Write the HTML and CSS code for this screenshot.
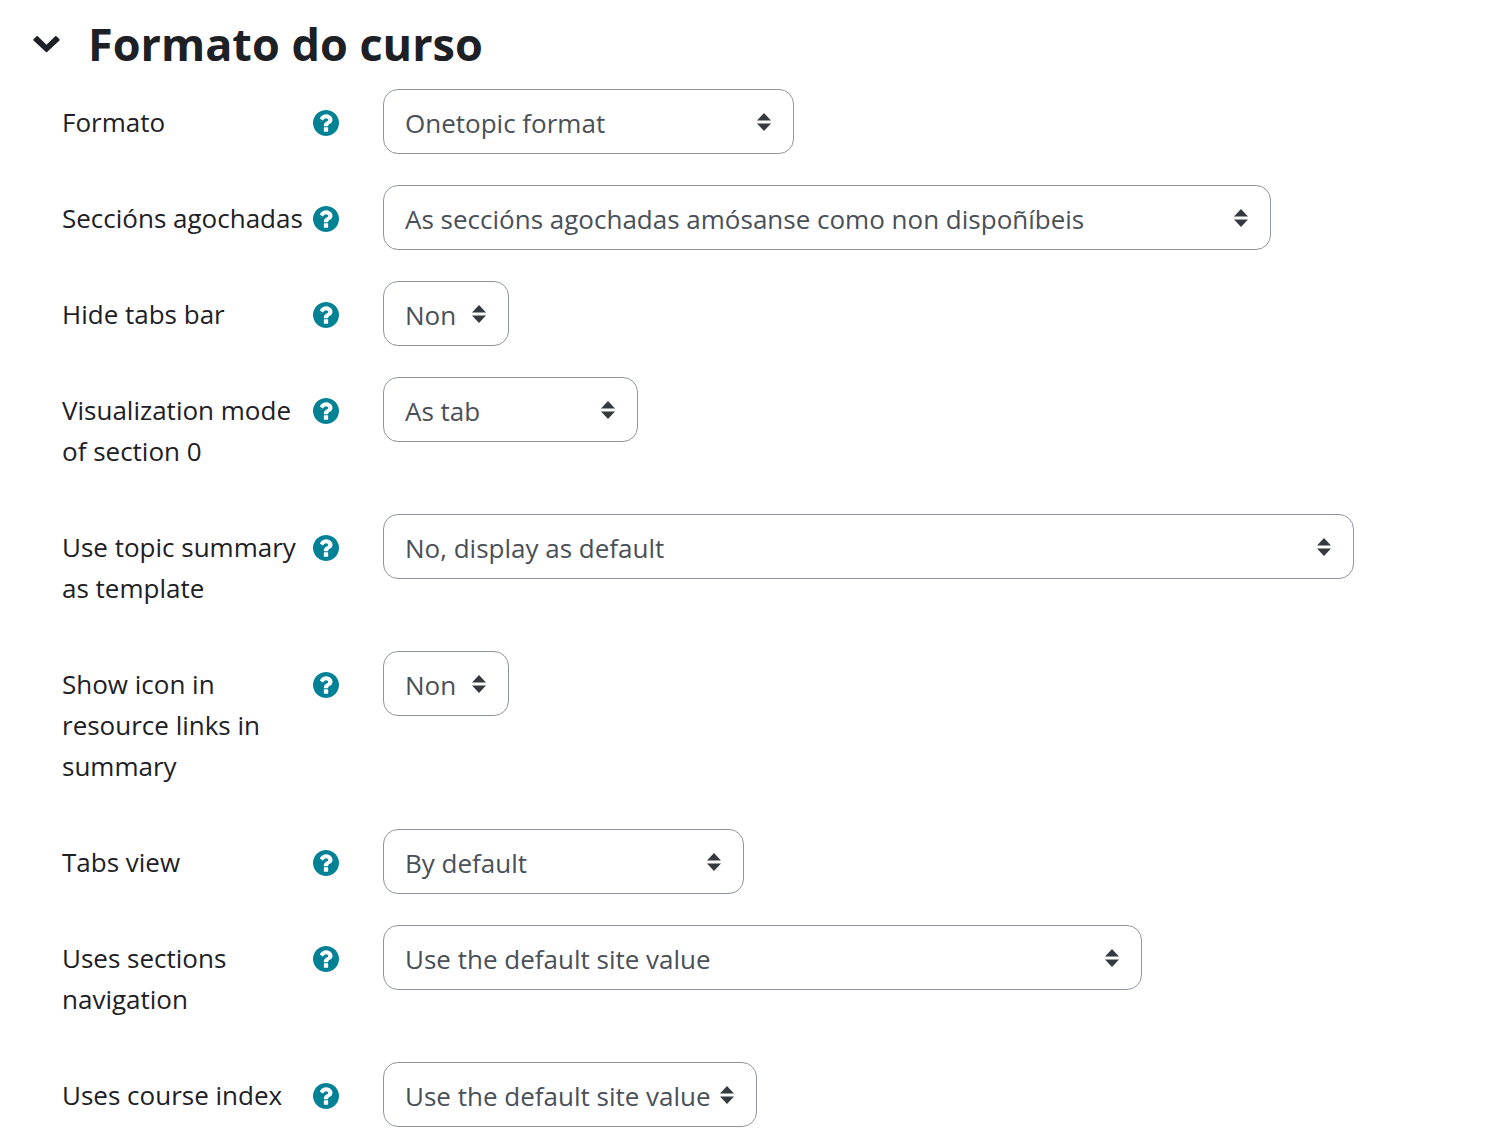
FILE: index.html
```
<!DOCTYPE html>
<html lang="gl">
  <head>
    <meta charset="UTF-8" />
    <meta name="viewport" content="width=device-width, initial-scale=1.0" />
    <title>Formato do curso</title>
    <link rel="stylesheet" href="styles.css">
  </head>
  <body>
    <!-- Shared help icon -->
    <svg class="sprite" aria-hidden="true">
      <symbol id="help" viewBox="0 128 1536 1536">
        <path fill="currentColor" d="M896 1376v-192q0-14-9-23t-23-9h-192q-14 0-23 9t-9 23v192q0 14 9 23t23 9h192q14 0 23-9t9-23zm256-672q0-88-55.500-163t-138.500-116-170-41q-243 0-371 213-15 24 8 42l132 100q7 6 19 6 16 0 25-12 53-68 86-92 34-24 86-24 48 0 85.500 26t37.500 59q0 38-20 61t-68 45q-63 28-115.500 86.500t-52.500 125.500v36q0 14 9 23t23 9h192q14 0 23-9t9-23q0-19 21.500-49.500t54.500-49.500q32-18 49-28.500t46-35 44.500-48 28-60.500 12.500-81zm384 192q0 209-103 385.500t-279.500 279.500-385.500 103-385.500-103-279.500-279.500-103-385.500 103-385.500 279.500-279.500 385.500-103 385.500 103 279.500 279.500 103 385.500z" />
      </symbol>
    </svg>

    <form class="course-form">
      <div class="section-header">
        <button type="button" class="toggle" aria-expanded="true" aria-label="Contraer">
          <svg viewBox="0 0 28 18" width="28" height="18">
            <path d="M14.500 17.500L1.500 5.500Q1 4.800 1.500 4.200L4.500 1.300Q5.200 0.800 5.800 1.300L14.500 9.700L23.200 1.300Q23.800 0.800 24.500 1.300L27.500 4.200Q28 4.800 27.500 5.500Z" fill="currentColor" />
          </svg>
        </button>
        <h1>Formato do curso</h1>
      </div>

      <div class="form-row">
        <label for="format">Formato</label>
        <button type="button" class="help" aria-label="Axuda"><svg><use href="#help" /></svg></button>
        <select id="format" class="w-format">
          <option>Onetopic format</option>
        </select>
      </div>

      <div class="form-row">
        <label for="hiddensections">Seccións agochadas</label>
        <button type="button" class="help" aria-label="Axuda"><svg><use href="#help" /></svg></button>
        <select id="hiddensections" class="w-hidden">
          <option>As seccións agochadas amósanse como non dispoñíbeis</option>
        </select>
      </div>

      <div class="form-row">
        <label for="hidetabsbar">Hide tabs bar</label>
        <button type="button" class="help" aria-label="Axuda"><svg><use href="#help" /></svg></button>
        <select id="hidetabsbar" class="w-yesno">
          <option>Non</option>
        </select>
      </div>

      <div class="form-row">
        <label for="section0">Visualization mode of section 0</label>
        <button type="button" class="help" aria-label="Axuda"><svg><use href="#help" /></svg></button>
        <select id="section0" class="w-section0">
          <option>As tab</option>
        </select>
      </div>

      <div class="form-row">
        <label for="templatetopic">Use topic summary as template</label>
        <button type="button" class="help" aria-label="Axuda"><svg><use href="#help" /></svg></button>
        <select id="templatetopic" class="w-template">
          <option>No, display as default</option>
        </select>
      </div>

      <div class="form-row">
        <label for="templateicons">Show icon in resource links in summary</label>
        <button type="button" class="help" aria-label="Axuda"><svg><use href="#help" /></svg></button>
        <select id="templateicons" class="w-yesno">
          <option>Non</option>
        </select>
      </div>

      <div class="form-row">
        <label for="tabsview">Tabs view</label>
        <button type="button" class="help" aria-label="Axuda"><svg><use href="#help" /></svg></button>
        <select id="tabsview" class="w-tabs">
          <option>By default</option>
        </select>
      </div>

      <div class="form-row">
        <label for="sectionsnav">Uses sections navigation</label>
        <button type="button" class="help" aria-label="Axuda"><svg><use href="#help" /></svg></button>
        <select id="sectionsnav" class="w-nav">
          <option>Use the default site value</option>
        </select>
      </div>

      <div class="form-row">
        <label for="courseindex">Uses course index</label>
        <button type="button" class="help" aria-label="Axuda"><svg><use href="#help" /></svg></button>
        <select id="courseindex" class="w-index">
          <option>Use the default site value</option>
        </select>
      </div>
    </form>
  </body>
</html>
```
FILE: styles.css
```
* {
  box-sizing: border-box;
}
body {
  margin: 0;
  background-color: #fff;
  color: #1d2125;
  font-family: "Open Sans", "Noto Sans", sans-serif;
  font-size: 26px;
  line-height: 41px;
}
button {
  padding: 0;
  border: 0;
  background: none;
  cursor: pointer;
}
.sprite {
  display: none;
}
.course-form {
  padding: 15px 32px 0;
}
.section-header {
  display: flex;
  align-items: center;
  gap: 28px;
  margin-bottom: 16px;
}
.section-header h1 {
  margin: 0;
  font-size: 45px;
  line-height: 58px;
}
.toggle {
  display: flex;
  color: #1d2125;
}
.form-row {
  display: grid;
  grid-template-columns: 251px 26px 1fr;
  align-items: start;
  margin: 0 0 31px 30px;
}
.form-row label {
  padding: 13px 4px 11px 0;
}
.help {
  display: flex;
  align-items: center;
  height: 65px;
  padding-top: 2px;
  color: #008196;
}
.help svg {
  flex: none;
  width: 26px;
  height: 26px;
}
select {
  height: 65px;
  max-width: 100%;
  margin-left: 44px;
  padding: 2px 52px 0 21px;
  border: 1px solid #8f959e;
  border-radius: 15px;
  appearance: none;
  background: #fff url("data:image/svg+xml,%3Csvg xmlns='http://www.w3.org/2000/svg' viewBox='0 0 14 18'%3E%3Cpath fill='%23343a40' d='M0 7.500L7 0l7 7.500zM0 10.500h14L7 18z'/%3E%3C/svg%3E") no-repeat right 22px center / 14px 18px;
  color: #495057;
  font-family: inherit;
  font-size: inherit;
}

/* Select widths */
.w-format {
  width: 411px;
}
.w-hidden {
  width: 888px;
}
.w-yesno {
  width: 126px;
  padding-right: 40px;
}
.w-section0 {
  width: 255px;
}
.w-template {
  width: 971px;
}
.w-tabs {
  width: 361px;
}
.w-nav {
  width: 759px;
}
.w-index {
  width: 374px;
  padding-right: 40px;
}
```
